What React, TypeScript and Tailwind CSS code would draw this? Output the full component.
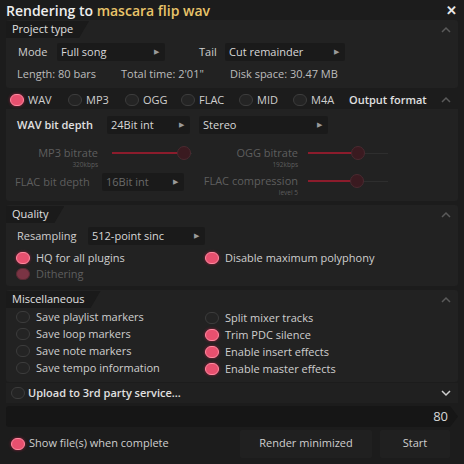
import React from "react";

const Radio = ({ on, dim }: { on?: boolean; dim?: boolean }) => (
  <span
    className={
      on
        ? dim
          ? "inline-block w-[14px] h-[12px] rounded-full bg-[#7a3444] border border-[#5a2a34] shrink-0"
          : "inline-block w-[14px] h-[12px] rounded-full bg-[#e8506f] border border-[#ff8aa0] shadow-[0_0_3px_#a02040] shrink-0"
        : "inline-block w-[14px] h-[12px] rounded-full bg-[#242424] border border-[#3c3c3c] shrink-0"
    }
  />
);

const Arrow = () => <span className="text-[7px] text-[#9a9a9a]">▶</span>;

const Dropdown = ({ label, w, dim }: { label: string; w: string; dim?: boolean }) => (
  <div className={`${w} h-[18px] flex items-center justify-between pl-[4px] pr-[6px] bg-[#1a1a1a] rounded-[2px] ${dim ? "text-[#6a6a6a]" : "text-[#d8d8d8]"}`}>
    <span>{label}</span>
    <Arrow />
  </div>
);

const Header = ({ title }: { title: string }) => (
  <div className="h-[17px] w-fit pl-[6px] pr-[16px] flex items-center bg-[#1a1a1a] [clip-path:polygon(0_0,100%_0,calc(100%-10px)_100%,0_100%)] text-[#e0e0e0]">
    {title}
  </div>
);

const Chevron = ({ down }: { down?: boolean }) => (
  <svg width="12" height="8" viewBox="0 0 12 8" className="shrink-0">
    <path d={down ? "M2 2 L6 6 L10 2" : "M2 6 L6 2 L10 6"} stroke={down ? "#d0d0d0" : "#5a5a5a"} strokeWidth="1.5" fill="none" />
  </svg>
);

const Slider = ({ pos }: { pos: number }) => (
  <div className="w-[80px] h-[16px] flex items-center">
    <div className="h-[2px] bg-[#8c1c2c]" style={{ width: pos }} />
    <div className="w-[14px] h-[14px] rounded-full bg-[#3a1a20] border border-[#4a2a30] shrink-0 -ml-[7px]" />
    <div className="flex-1 h-[1px] bg-[#2e2e2e]" />
  </div>
);

const Item = ({ on, label }: { on?: boolean; label: string }) => (
  <div className="flex items-center gap-[6px] h-[14px]"><Radio on={on} /><span>{label}</span></div>
);

const SliderLabel = ({ w, label, sub, cls }: { w: string; label: string; sub: string; cls?: string }) => (
  <div className={`${w} ${cls ?? ""} flex flex-col items-end text-[#5e5e5e]`}>
    <span className="leading-[15px]">{label}</span>
    <span className="text-[6.5px] leading-[9px]">{sub}</span>
  </div>
);

export default function App() {
  return (
    <div className="w-[464px] h-[464px] bg-[#1c1c1c] text-[11px] text-[#cfcfcf] font-['Open_Sans',sans-serif] flex flex-col overflow-hidden">
      {/* Title */}
      <div className="h-[20px] flex items-center justify-between pl-[6px] pr-[7px] text-[14px] font-semibold">
        <div>
          <span className="text-[#eeeeee]">Rendering to </span>
          <span className="text-[#e9c46a]">mascara flip wav</span>
        </div>
        <span className="text-[#e8e8e8] text-[13px] font-bold leading-none">✕</span>
      </div>

      {/* Project type */}
      <div className="mx-[6px] h-[68px] bg-[#222222] rounded-[3px] flex flex-col">
        <div className="flex items-center justify-between pr-[6px] pt-[1px]">
          <Header title="Project type" />
          <Chevron />
        </div>
        <div className="flex items-center mt-[5px] pl-[12px]">
          <span className="w-[39px]">Mode</span>
          <Dropdown label="Full song" w="w-[108px]" />
          <span className="ml-[34px] w-[26px]">Tail</span>
          <Dropdown label="Cut remainder" w="w-[120px]" />
        </div>
        <div className="flex items-center mt-[5px] pl-[11px] text-[#bdbdbd]">
          <span className="w-[104px]">Length: 80 bars</span>
          <span className="w-[109px]">Total time: 2'01"</span>
          <span>Disk space: 30.47 MB</span>
        </div>
      </div>

      {/* Output format */}
      <div className="mx-[6px] mt-[3px] h-[110px] bg-[#222222] rounded-[3px] flex flex-col">
        <div className="h-[18px] flex items-center pl-[4px] pr-[6px] bg-[#1c1c1c]">
          <div className="flex items-center gap-[4px] w-[58px]"><Radio on /><span>WAV</span></div>
          <div className="flex items-center gap-[4px] w-[57px]"><Radio /><span>MP3</span></div>
          <div className="flex items-center gap-[4px] w-[56px]"><Radio /><span>OGG</span></div>
          <div className="flex items-center gap-[4px] w-[58px]"><Radio /><span>FLAC</span></div>
          <div className="flex items-center gap-[4px] w-[54px]"><Radio /><span>MID</span></div>
          <div className="flex items-center gap-[4px] w-[56px]"><Radio /><span>M4A</span></div>
          <span className="text-[#e0e0e0] font-semibold flex-1">Output format</span>
          <Chevron />
        </div>
        <div className="flex items-center mt-[7px] pl-[11px]">
          <span className="w-[90px] text-[#e0e0e0] font-semibold">WAV bit depth</span>
          <Dropdown label="24Bit int" w="w-[83px]" />
          <span className="w-[9px]" />
          <Dropdown label="Stereo" w="w-[129px]" />
        </div>
        <div className="flex items-start mt-[11px]">
          <SliderLabel w="w-[92px]" label="MP3 bitrate" sub="320kbps" />
          <div className="ml-[14px]"><Slider pos={72} /></div>
          <SliderLabel w="w-[98px]" cls="ml-[8px]" label="OGG bitrate" sub="192kbps" />
          <div className="ml-[10px]"><Slider pos={50} /></div>
        </div>
        <div className="flex items-start mt-[4px] text-[#5e5e5e]">
          <span className="w-[96px] pl-[9px] leading-[18px]">FLAC bit depth</span>
          <Dropdown label="16Bit int" w="w-[82px]" dim />
          <SliderLabel w="w-[118px]" cls="-ml-[4px]" label="FLAC compression" sub="level 5" />
          <div className="ml-[10px]"><Slider pos={49} /></div>
        </div>
      </div>

      {/* Quality */}
      <div className="mx-[6px] mt-[4px] h-[81px] bg-[#222222] rounded-[3px] flex flex-col">
        <div className="flex items-center justify-between pr-[6px] pt-[1px]">
          <Header title="Quality" />
          <Chevron />
        </div>
        <div className="flex items-center mt-[4px] pl-[11px]">
          <span className="w-[71px]">Resampling</span>
          <Dropdown label="512-point sinc" w="w-[117px]" />
        </div>
        <div className="flex items-center h-[14px] mt-[6px] pl-[10px]">
          <div className="flex items-center gap-[6px] w-[189px]"><Radio on /><span>HQ for all plugins</span></div>
          <div className="flex items-center gap-[6px]"><Radio on /><span>Disable maximum polyphony</span></div>
        </div>
        <div className="flex items-center h-[14px] mt-[2px] pl-[10px] text-[#5e5e5e]">
          <div className="flex items-center gap-[6px]"><Radio on dim /><span>Dithering</span></div>
        </div>
      </div>

      {/* Miscellaneous */}
      <div className="mx-[6px] mt-[4px] h-[92px] bg-[#222222] rounded-[3px] flex flex-col">
        <div className="flex items-center justify-between pr-[6px] pt-[1px]">
          <Header title="Miscellaneous" />
          <Chevron />
        </div>
        <div className="flex pl-[10px] mt-[2px]">
          <div className="w-[189px] flex flex-col gap-[3px]">
            <Item label="Save playlist markers" />
            <Item label="Save loop markers" />
            <Item label="Save note markers" />
            <Item label="Save tempo information" />
          </div>
          <div className="flex flex-col gap-[3px] mt-[1px]">
            <Item label="Split mixer tracks" />
            <Item on label="Trim PDC silence" />
            <Item on label="Enable insert effects" />
            <Item on label="Enable master effects" />
          </div>
        </div>
      </div>

      {/* Upload */}
      <div className="mx-[6px] mt-[1px] h-[20px] flex items-center justify-between pl-[5px] pr-[6px] bg-[#202020]">
        <div className="flex items-center gap-[3px] text-[#e0e0e0] font-semibold"><Radio /><span>Upload to 3rd party service...</span></div>
        <Chevron down />
      </div>

      {/* Progress */}
      <div className="mx-[6px] mt-[3px] h-[21px] flex items-center">
        <div className="flex-1 h-full bg-[#161616] rounded-l-[3px] flex items-center justify-end pr-[2px] text-[13px] text-[#d8d8d8]">80</div>
        <div className="w-[8px] h-full bg-[#161616] [clip-path:polygon(0_0,0_100%,100%_50%)]" />
      </div>

      {/* Bottom */}
      <div className="mx-[6px] mt-[2px] h-[29px] flex items-center">
        <div className="flex items-center gap-[4px] pl-[5px] w-[234px]"><Radio on /><span>Show file(s) when complete</span></div>
        <div className="w-[132px] h-[28px] bg-[#202020] rounded-[2px] flex items-center justify-center">Render minimized</div>
        <div className="ml-[8px] w-[70px] h-[28px] bg-[#202020] rounded-[2px] flex items-center justify-center">Start</div>
      </div>
    </div>
  );
}
